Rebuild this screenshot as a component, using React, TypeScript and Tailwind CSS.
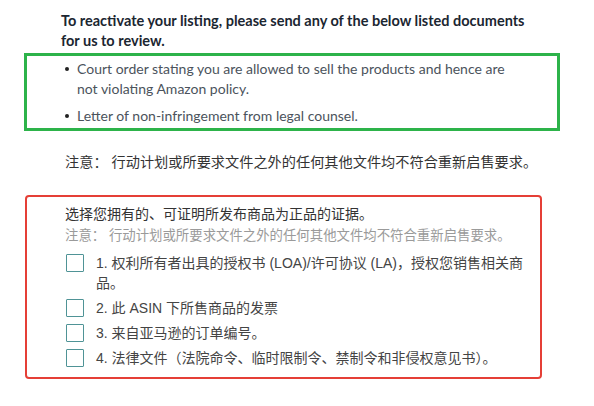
export default function App() {
  const items = [
    "1. 权利所有者出具的授权书 (LOA)/许可协议 (LA)，授权您销售相关商品。",
    "2. 此 ASIN 下所售商品的发票",
    "3. 来自亚马逊的订单编号。",
    "4. 法律文件（法院命令、临时限制令、禁制令和非侵权意见书）。",
  ];
  const cjk = { fontFamily: '"Liberation Sans", "Noto Sans CJK SC", sans-serif' };
  return (
    <div className="w-[594px] h-[406px] bg-white overflow-hidden relative" style={{ fontFamily: 'Lato, "Noto Sans", sans-serif' }}>
      <div className="pt-[11px] pl-[61px] w-[545px] text-[14.5px] leading-[20px] font-bold text-[#1b2631]">
        To reactivate your listing, please send any of the below listed documents for us to review.
      </div>
      <div className="mt-[2px] ml-[24px] w-[536px] h-[78px] border-[3px] border-[#2db34a] pt-[3px] pl-[38px]">
        <div className="w-[450px] text-[14px] leading-[19.5px] text-[#4b535c]">
          <div className="flex">
            <div className="w-[12px] shrink-0 pt-[8px]"><div className="w-[4px] h-[4px] rounded-full bg-[#222]" /></div>
            <div>Court order stating you are allowed to sell the products and hence are not violating Amazon policy.</div>
          </div>
          <div className="flex mt-[8px]">
            <div className="w-[12px] shrink-0 pt-[8px]"><div className="w-[4px] h-[4px] rounded-full bg-[#222]" /></div>
            <div>Letter of non-infringement from legal counsel.</div>
          </div>
        </div>
      </div>
      <div className="mt-[21px] pl-[65px] text-[14.2px] leading-[20px] text-[#333]" style={cjk}>
        注意：&nbsp;行动计划或所要求文件之外的任何其他文件均不符合重新启售要求。
      </div>
      <div className="mt-[23px] ml-[25px] w-[517px] h-[184px] border-[2.5px] border-[#e53f36] rounded-[4px] pt-[7px] pl-[38px] pr-[6px]" style={cjk}>
        <div className="text-[14px] leading-[20px] text-[#333]">选择您拥有的、可证明所发布商品为正品的证据。</div>
        <div className="mt-[3px] text-[13.4px] leading-[18px] text-[#9a9a9a]">注意：&nbsp;行动计划或所要求文件之外的任何其他文件均不符合重新启售要求。</div>
        <div className="mt-[8px] flex flex-col gap-[5px]">
          {items.map((t, i) => (
            <div key={i} className="flex items-start">
              <div className="mt-[1px] ml-[1px] w-[18px] h-[18px] shrink-0 border-[1.5px] border-[#4f9396] rounded-[1px]" />
              <div className="ml-[12px] text-[14px] leading-[20px] text-[#444] pr-[2px]">{t}</div>
            </div>
          ))}
        </div>
      </div>
    </div>
  );
}
